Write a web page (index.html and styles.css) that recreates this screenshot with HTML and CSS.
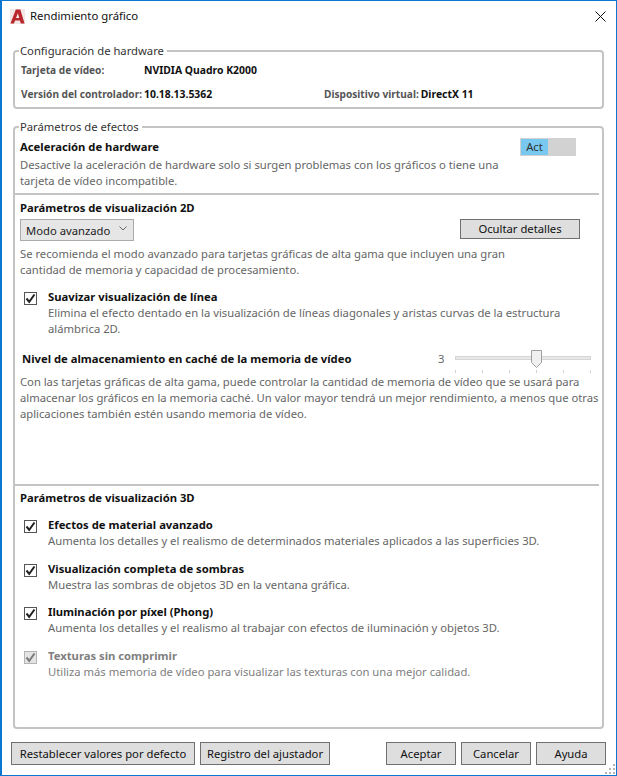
FILE: index.html
```html
<!DOCTYPE html>
<html lang="es">
<head>
    <meta charset="UTF-8">
    <title>Rendimiento gráfico</title>
    <link rel="stylesheet" href="styles.css">
</head>
<body>
    <div class="window">
        <div class="titlebar">
            <svg class="app-icon" width="15" height="15" viewBox="0 0 16 16">
                <rect width="16" height="16" fill="#f3e6e6"/>
                <path d="M0.5 15.5 L6.2 0.5 L11 0.5 L15.5 15.5 L11.5 15.5 L10.6 12.3 L5.4 12.3 L4.2 15.5 Z M6.4 9.6 L9.9 9.6 L8.4 4.4 Z" fill="#b8272c" fill-rule="evenodd"/>
            </svg>
            <span class="title">Rendimiento gráfico</span>
            <svg class="close" width="11" height="11" viewBox="0 0 11 11">
                <path d="M0.5 0.5 L10.5 10.5 M10.5 0.5 L0.5 10.5" stroke="#111" stroke-width="1" fill="none"/>
            </svg>
        </div>

        <fieldset class="group hardware">
            <legend>Configuración de hardware</legend>
            <div class="hw-row">
                <span class="hw-label hw-first">Tarjeta de vídeo:</span>
                <span class="hw-value">NVIDIA Quadro K2000</span>
            </div>
            <div class="hw-row">
                <span class="hw-label hw-first">Versión del controlador:</span>
                <span class="hw-value hw-version">10.18.13.5362</span>
                <span class="hw-label">Dispositivo virtual:</span>
                <span class="hw-value hw-device">DirectX 11</span>
            </div>
        </fieldset>

        <fieldset class="group effects">
            <legend>Parámetros de efectos</legend>

            <section class="section accel">
                <div class="accel-head">
                    <h3>Aceleración de hardware</h3>
                    <div class="toggle"><span class="toggle-on">Act</span></div>
                </div>
                <p class="desc">Desactive la aceleración de hardware solo si surgen problemas con los gráficos o tiene una<br>tarjeta de vídeo incompatible.</p>
            </section>

            <section class="section viz2d">
                <h3>Parámetros de visualización 2D</h3>
                <div class="mode-row">
                    <div class="select">Modo avanzado
                        <svg width="8" height="5" viewBox="0 0 8 5"><path d="M0.5 0.5 L4 4 L7.5 0.5" stroke="#666" fill="none"/></svg>
                    </div>
                    <button class="btn details">Ocultar detalles</button>
                </div>
                <p class="desc mode-desc">Se recomienda el modo avanzado para tarjetas gráficas de alta gama que incluyen una gran<br>cantidad de memoria y capacidad de procesamiento.</p>

                <div class="check-row smooth">
                    <span class="check"><svg width="11" height="11" viewBox="0 0 11 11"><path d="M1.5 5.5 L4.2 8.8 L9.5 1.5" stroke="#222" stroke-width="2" fill="none"/></svg></span>
                    <div>
                        <h4>Suavizar visualización de línea</h4>
                        <p class="desc">Elimina el efecto dentado en la visualización de líneas diagonales y aristas curvas de la estructura<br>alámbrica 2D.</p>
                    </div>
                </div>

                <div class="cache-row">
                    <h4>Nivel de almacenamiento en caché de la memoria de vídeo</h4>
                    <span class="cache-value">3</span>
                    <div class="slider">
                        <div class="slider-track"></div>
                        <svg class="slider-thumb" width="11" height="18" viewBox="0 0 11 18"><path d="M0.5 0.5 H10.5 V12.5 L5.5 17.5 L0.5 12.5 Z" fill="#f0f0f0" stroke="#a0a0a0"/></svg>
                        <div class="ticks"><i></i><i></i><i></i><i></i><i></i><i></i></div>
                    </div>
                </div>
                <p class="desc cache-desc">Con las tarjetas gráficas de alta gama, puede controlar la cantidad de memoria de vídeo que se usará para<br>almacenar los gráficos en la memoria caché. Un valor mayor tendrá un mejor rendimiento, a menos que otras<br>aplicaciones también estén usando memoria de vídeo.</p>
            </section>

            <section class="section viz3d">
                <h3>Parámetros de visualización 3D</h3>
                <div class="check-row">
                    <span class="check"><svg width="11" height="11" viewBox="0 0 11 11"><path d="M1.5 5.5 L4.2 8.8 L9.5 1.5" stroke="#222" stroke-width="2" fill="none"/></svg></span>
                    <div>
                        <h4>Efectos de material avanzado</h4>
                        <p class="desc">Aumenta los detalles y el realismo de determinados materiales aplicados a las superficies 3D.</p>
                    </div>
                </div>
                <div class="check-row">
                    <span class="check"><svg width="11" height="11" viewBox="0 0 11 11"><path d="M1.5 5.5 L4.2 8.8 L9.5 1.5" stroke="#222" stroke-width="2" fill="none"/></svg></span>
                    <div>
                        <h4>Visualización completa de sombras</h4>
                        <p class="desc">Muestra las sombras de objetos 3D en la ventana gráfica.</p>
                    </div>
                </div>
                <div class="check-row">
                    <span class="check"><svg width="11" height="11" viewBox="0 0 11 11"><path d="M1.5 5.5 L4.2 8.8 L9.5 1.5" stroke="#222" stroke-width="2" fill="none"/></svg></span>
                    <div>
                        <h4>Iluminación por píxel (Phong)</h4>
                        <p class="desc">Aumenta los detalles y el realismo al trabajar con efectos de iluminación y objetos 3D.</p>
                    </div>
                </div>
                <div class="check-row disabled">
                    <span class="check"><svg width="11" height="11" viewBox="0 0 11 11"><path d="M1.5 5.5 L4.2 8.8 L9.5 1.5" stroke="#7a7a7a" stroke-width="2" fill="none"/></svg></span>
                    <div>
                        <h4>Texturas sin comprimir</h4>
                        <p class="desc">Utiliza más memoria de vídeo para visualizar las texturas con una mejor calidad.</p>
                    </div>
                </div>
            </section>
        </fieldset>

        <div class="footer">
            <button class="btn reset">Restablecer valores por defecto</button>
            <button class="btn tuner">Registro del ajustador</button>
            <button class="btn accept">Aceptar</button>
            <button class="btn action">Cancelar</button>
            <button class="btn action">Ayuda</button>
        </div>

        <svg class="grip" width="11" height="11" viewBox="0 0 11 11" fill="#b5b5b5">
            <rect x="8" y="0" width="2" height="2"/><rect x="8" y="4" width="2" height="2"/><rect x="4" y="4" width="2" height="2"/>
            <rect x="8" y="8" width="2" height="2"/><rect x="4" y="8" width="2" height="2"/><rect x="0" y="8" width="2" height="2"/>
        </svg>
    </div>
</body>
</html>
```

FILE: styles.css
```css
html, body {
    margin: 0;
    padding: 0;
}
body {
    font-family: "Noto Sans", "Open Sans", Arial, sans-serif;
    font-size: 11.25px;
    line-height: 16px;
    color: #111;
    background: #fff;
}
.window {
    position: relative;
    width: 617px;
    height: 776px;
    box-sizing: border-box;
    border: 1px solid #0a78d0;
    border-left-width: 2px;
    padding: 0 12px 0 11px;
    overflow: hidden;
}
.titlebar {
    display: flex;
    align-items: center;
    height: 30px;
    margin: 0 -2px 12px -3px;
    font-size: 11.35px;
}
.app-icon {
    margin-right: 5px;
}
.title {
    flex: 1;
}
.group {
    margin: 0;
    padding: 0;
    border: 2px solid #c4c4c4;
    border-radius: 4px;
    min-width: 0;
    box-sizing: border-box;
}
.group legend {
    padding: 0 3px 0 1px;
    margin-left: 4px;
    color: #333;
    line-height: 16px;
}
.hardware {
    height: 66px;
    margin-bottom: 10px;
    padding: 0 6px;
}
.hardware legend {
    margin-left: -2px;
}
.hw-row {
    display: flex;
    height: 24px;
    align-items: center;
    font-weight: 700;
    white-space: nowrap;
    margin-top: -1px;
    margin-bottom: 1px;
}
.hw-label {
    color: #555;
    font-size: 10.15px;
}
.hw-first {
    flex: none;
    width: 123px;
}
.hw-value {
    color: #111;
    font-size: 10.4px;
}
.hw-version {
    flex: none;
    width: 180px;
}
.hw-device {
    margin-left: 2px;
}
.effects {
    height: 610px;
}
.section {
    box-sizing: border-box;
    padding: 0 5px;
    white-space: nowrap;
}
h3, h4 {
    margin: 0;
    font-size: 11.25px;
    font-weight: 700;
    color: #111;
}
.desc {
    margin: 0;
    color: #666;
}
.cache-desc {
    letter-spacing: -0.015px;
}
.accel {
    height: 60px;
    border-bottom: 2px solid #c4c4c4;
    margin-right: 3px;
    padding-top: 4px;
}
.accel-head {
    display: flex;
    justify-content: space-between;
    height: 18px;
}
.toggle {
    width: 56px;
    height: 18px;
    margin: -1px 18px 0 0;
    background: #d2d2d2;
    box-sizing: border-box;
    padding: 1px;
    color: #333;
}
.toggle-on {
    display: block;
    width: 27px;
    height: 16px;
    background: #78c8f0;
    text-align: center;
}
.viz2d {
    height: 291px;
    border-bottom: 2px solid #c4c4c4;
    margin-right: 3px;
    padding-top: 5px;
}
.mode-row {
    display: flex;
    justify-content: space-between;
    align-items: flex-start;
    margin-top: 3px;
    padding-right: 14px;
}
.select {
    width: 114px;
    height: 22px;
    box-sizing: border-box;
    border: 1px solid #ababab;
    background: #e6e6e6;
    padding: 3px 6px 0 5px;
    display: flex;
    justify-content: space-between;
    color: #222;
}
.select svg {
    margin-top: 3px;
}
.btn {
    flex: none;
    font-family: inherit;
    font-size: 11.25px;
    line-height: 16px;
    height: 23px;
    padding: 0;
    box-sizing: border-box;
    border: 1px solid #707070;
    background: #dedede;
    color: #111;
}
.details {
    width: 120px;
    height: 20px;
}
.mode-desc {
    margin-top: 5px;
}
.check-row {
    display: flex;
    margin-bottom: 11.5px;
}
.check {
    box-sizing: border-box;
    width: 13px;
    height: 13px;
    flex: none;
    border: 1px solid #555;
    margin: 3px 11px 0 4px;
    background: #fff;
}
.check svg {
    display: block;
}
.smooth {
    margin-top: 11px;
    margin-bottom: 0;
}
.cache-row {
    display: flex;
    align-items: flex-start;
    height: 23px;
    margin-top: 14px;
    padding-left: 2px;
}
.cache-row h4 {
    width: 416px;
}
.cache-value {
    width: 17px;
    color: #666;
}
.slider {
    position: relative;
    width: 136px;
}
.slider-track {
    box-sizing: border-box;
    height: 4px;
    margin-top: 5px;
    background: #e8e8e8;
    border: 1px solid #d6d6d6;
}
.slider-thumb {
    position: absolute;
    left: 76px;
    top: -1px;
}
.ticks {
    display: flex;
    justify-content: space-between;
    margin-top: 10px;
}
.ticks i {
    width: 1px;
    height: 3px;
    background: #d0d0d0;
}
.viz3d {
    padding-top: 4px;
}
.viz3d h3 {
    margin-bottom: 11px;
}
.disabled h4, .disabled .desc {
    color: #808080;
}
.disabled .check {
    background: #e4e4e4;
    border-color: #b4b4b4;
}
.footer {
    display: flex;
    margin: 13px 0 0 -2px;
}
.reset {
    width: 184px;
    margin-right: 5px;
}
.tuner {
    width: 130px;
    margin-right: 56px;
}
.accept, .action {
    width: 70px;
    margin-right: 5px;
}
.grip {
    position: absolute;
    right: 0;
    bottom: 0;
}
```
